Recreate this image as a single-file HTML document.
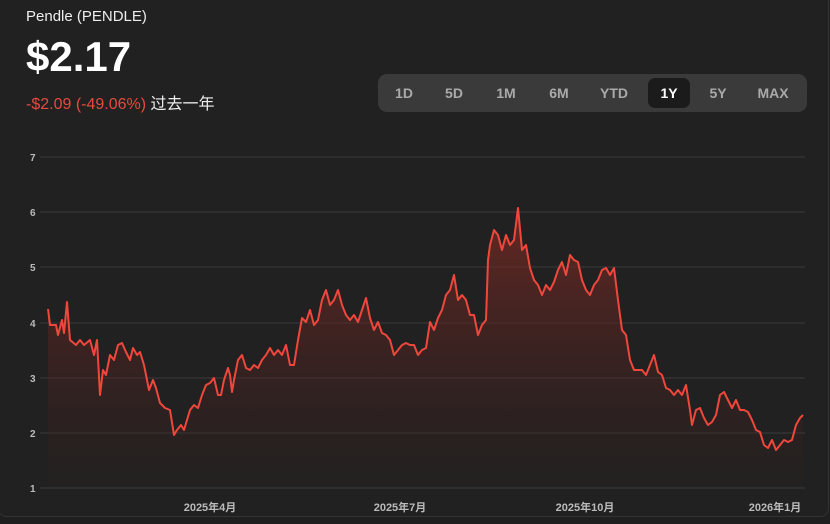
<!DOCTYPE html>
<html><head><meta charset="utf-8"><style>
body{margin:0;width:830px;height:524px;background:#1f1f1f;font-family:"Liberation Sans","Noto Sans CJK SC",sans-serif;overflow:hidden;position:relative;color:#fff}
.card{position:absolute;left:-2px;top:-10px;width:831px;height:527px;border:1px solid #333;border-radius:8px;background:#212121;box-sizing:border-box}
.t{position:absolute;left:26px;top:8px;font-size:15px;color:#eee}
.p{position:absolute;left:26px;top:33px;font-size:42px;font-weight:bold}
.c{position:absolute;left:26px;top:90px;font-size:16px;color:#e84a3f}
.c span{color:#eee}
.bar{position:absolute;left:378px;top:74px;width:429px;height:38px;background:#3a3a3a;border-radius:9px}
.bar div{position:absolute;top:4px;height:30px;line-height:30px;font-size:14px;font-weight:bold;color:#aaa;text-align:center}
.sel{background:#1b1b1b;border-radius:7px;color:#fff!important}
</style></head><body>
<div class="card"></div>
<div class="t">Pendle (PENDLE)</div>
<div class="p">$2.17</div>
<div class="c">-$2.09 (-49.06%) <span>过去一年</span></div>
<div class="bar">
<div style="left:12px;width:28px">1D</div>
<div style="left:62px;width:28px">5D</div>
<div style="left:113px;width:30px">1M</div>
<div style="left:166px;width:30px">6M</div>
<div style="left:218px;width:36px">YTD</div>
<div class="sel" style="left:270px;width:42px">1Y</div>
<div style="left:326px;width:28px">5Y</div>
<div style="left:375px;width:40px">MAX</div>
</div>
<svg width="830" height="524" style="position:absolute;left:0;top:0">
<defs><linearGradient id="g" x1="0" y1="0" x2="0" y2="1"><stop offset="0" stop-color="#7a2a24" stop-opacity=".8"/><stop offset="1" stop-color="#3a1f1e" stop-opacity="0.1"/></linearGradient></defs>
<g stroke="#3a3a3a" stroke-width="1">
<line x1="40" y1="157" x2="805" y2="157"/><line x1="40" y1="212" x2="805" y2="212"/><line x1="40" y1="267" x2="805" y2="267"/><line x1="40" y1="323" x2="805" y2="323"/><line x1="40" y1="378" x2="805" y2="378"/><line x1="40" y1="433" x2="805" y2="433"/><line x1="40" y1="488" x2="805" y2="488"/>
</g>
<g fill="#bbb" font-size="10" font-weight="bold" font-family="Liberation Sans">
<text x="30" y="161">7</text><text x="30" y="216">6</text><text x="30" y="271">5</text><text x="30" y="327">4</text><text x="30" y="382">3</text><text x="30" y="437">2</text><text x="30" y="492">1</text>
</g>
<g fill="#bbb" font-size="11" font-weight="bold" font-family="Liberation Sans,Noto Sans CJK SC,sans-serif" text-anchor="middle">
<text x="210" y="511">2025年4月</text><text x="400" y="511">2025年7月</text><text x="585" y="511">2025年10月</text><text x="775" y="511">2026年1月</text>
</g>
<polygon fill="url(#g)" points="48,309 50,325 56,325 58,335 62,320 64,333 67,302 70,340 76,345 80,340 84,345 90,340 94,355 97,340 100,395 103,370 106,375 110,355 114,360 118,345 122,343 126,352 130,360 133,348 137,355 140,352 144,365 146,375 149,390 153,380 156,388 160,403 165,408 170,410 174,435 177,430 181,425 184,430 187,420 190,410 194,405 198,408 202,395 206,385 210,383 214,378 218,395 221,395 224,380 228,368 230,375 232,392 234,380 238,360 242,355 246,368 250,370 254,365 258,368 262,360 266,355 270,348 274,355 278,350 282,355 286,345 290,365 294,365 298,340 302,318 306,322 310,310 314,325 318,320 322,300 326,290 330,305 334,300 338,290 342,305 346,315 350,320 354,315 358,322 362,310 366,298 370,318 374,330 378,322 382,333 386,335 390,340 394,355 398,350 402,345 406,343 410,345 414,345 418,355 422,350 426,348 430,322 434,330 438,318 442,310 446,295 450,290 454,275 458,300 462,295 466,300 470,315 474,315 478,335 482,325 486,320 488,260 490,245 494,230 498,235 502,250 506,235 510,245 514,240 518,208 522,250 526,245 530,268 534,280 538,285 542,295 546,285 550,290 554,282 558,270 562,262 566,275 570,255 574,260 578,262 582,280 586,290 590,295 594,285 598,280 602,270 606,268 610,275 614,268 618,300 622,330 626,335 630,360 634,370 638,370 642,370 646,375 650,365 654,355 658,372 662,375 666,388 670,390 674,395 678,390 682,395 686,385 690,410 692,425 696,410 700,408 704,418 708,425 712,422 716,415 720,395 724,392 728,400 732,408 736,400 740,410 744,410 748,412 752,420 756,430 760,432 764,445 768,448 772,440 776,450 780,445 784,440 788,442 792,440 796,425 800,418 803,415 803,485 48,485"/>
<polyline fill="none" stroke="#f0473c" stroke-width="2" stroke-linejoin="round" points="48,309 50,325 56,325 58,335 62,320 64,333 67,302 70,340 76,345 80,340 84,345 90,340 94,355 97,340 100,395 103,370 106,375 110,355 114,360 118,345 122,343 126,352 130,360 133,348 137,355 140,352 144,365 146,375 149,390 153,380 156,388 160,403 165,408 170,410 174,435 177,430 181,425 184,430 187,420 190,410 194,405 198,408 202,395 206,385 210,383 214,378 218,395 221,395 224,380 228,368 230,375 232,392 234,380 238,360 242,355 246,368 250,370 254,365 258,368 262,360 266,355 270,348 274,355 278,350 282,355 286,345 290,365 294,365 298,340 302,318 306,322 310,310 314,325 318,320 322,300 326,290 330,305 334,300 338,290 342,305 346,315 350,320 354,315 358,322 362,310 366,298 370,318 374,330 378,322 382,333 386,335 390,340 394,355 398,350 402,345 406,343 410,345 414,345 418,355 422,350 426,348 430,322 434,330 438,318 442,310 446,295 450,290 454,275 458,300 462,295 466,300 470,315 474,315 478,335 482,325 486,320 488,260 490,245 494,230 498,235 502,250 506,235 510,245 514,240 518,208 522,250 526,245 530,268 534,280 538,285 542,295 546,285 550,290 554,282 558,270 562,262 566,275 570,255 574,260 578,262 582,280 586,290 590,295 594,285 598,280 602,270 606,268 610,275 614,268 618,300 622,330 626,335 630,360 634,370 638,370 642,370 646,375 650,365 654,355 658,372 662,375 666,388 670,390 674,395 678,390 682,395 686,385 690,410 692,425 696,410 700,408 704,418 708,425 712,422 716,415 720,395 724,392 728,400 732,408 736,400 740,410 744,410 748,412 752,420 756,430 760,432 764,445 768,448 772,440 776,450 780,445 784,440 788,442 792,440 796,425 800,418 803,415"/>
</svg>
</body></html>
